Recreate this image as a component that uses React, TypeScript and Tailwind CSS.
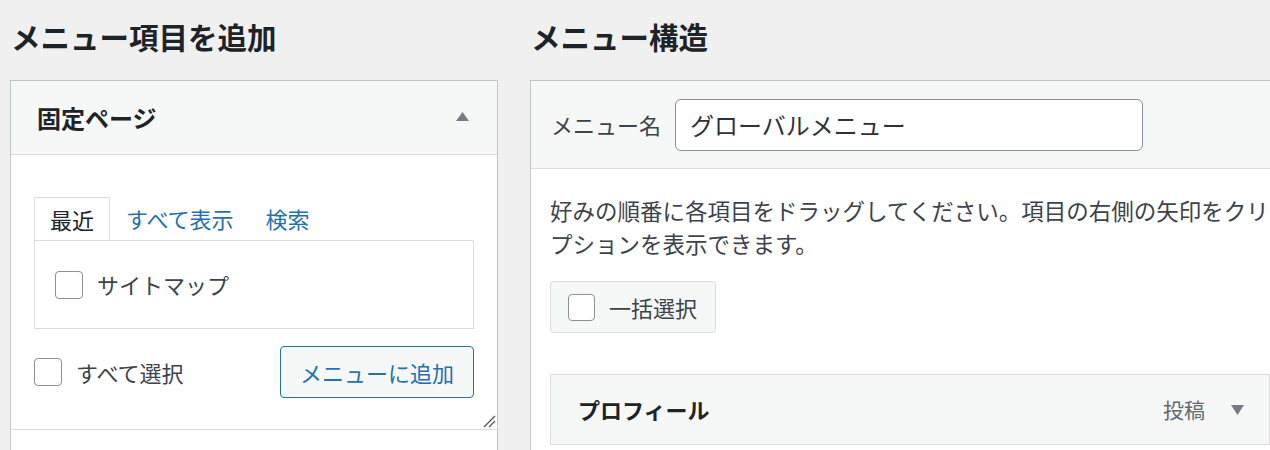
import React from "react";

const FONT = { fontFamily: '"Noto Sans CJK JP", "Noto Sans", sans-serif' };

function Checkbox({ size = 28 }: { size?: number }) {
  return (
    <span
      className="inline-block shrink-0 rounded-[4px] border border-[#8c8f94] bg-white"
      style={{ width: size, height: size }}
    />
  );
}

export default function App() {
  return (
    <div
      className="flex h-[450px] w-[1270px] items-start overflow-hidden bg-[#f0f0f1] text-[#3c434a]"
      style={FONT}
    >
      {/* Left column */}
      <div className="ml-[10px] w-[488px] shrink-0">
        <h2 className="mt-[17px] mb-[25px] pl-[1px] text-[29.5px] font-bold leading-[38px] text-[#1d2327]">
          メニュー項目を追加
        </h2>
        <div className="border border-[#c3c4c7] bg-white">
          <div className="flex h-[74px] items-center justify-between border-b border-[#dcdcde] bg-[#f6f7f7] pl-[26px] pr-[28px]">
            <h3 className="text-[24px] font-bold text-[#1d2327]">固定ページ</h3>
            <svg className="mb-[3px]" width="13" height="9" viewBox="0 0 13 9">
              <polygon points="6.5,0 13,9 0,9" fill="#787c82" />
            </svg>
          </div>
          <div className="relative px-[23px] pt-[42px] pb-[31px]">
            <div className="flex items-end">
              <div className="flex h-[43px] items-center border-x border-t border-[#dcdcde] bg-white px-[15px] text-[22px] text-[#1d2327]">
                最近
              </div>
              <div className="flex h-[43px] items-center pl-[16px] text-[22px] text-[#2271b1]">
                すべて表示
              </div>
              <div className="flex h-[43px] items-center pl-[32px] text-[22px] text-[#2271b1]">
                検索
              </div>
            </div>
            <div className="flex h-[89px] items-center gap-[14px] border border-[#dcdcde] pl-[20px]">
              <Checkbox />
              <span className="text-[22px] text-[#3c434a]">サイトマップ</span>
            </div>
            <div className="mt-[17px] flex h-[52px] items-center justify-between">
              <div className="flex items-center gap-[14px]">
                <Checkbox />
                <span className="text-[22px] text-[#3c434a]">すべて選択</span>
              </div>
              <div className="flex h-[52px] w-[194px] items-center justify-center rounded-[4px] border border-[#2271b1] bg-[#f6f7f7] text-[22px] text-[#2271b1]">
                メニューに追加
              </div>
            </div>
            <svg
              className="absolute right-[1px] bottom-[1px]"
              width="13"
              height="13"
              viewBox="0 0 13 13"
            >
              <line x1="1" y1="12" x2="12" y2="1" stroke="#50575e" strokeWidth="1.3" />
              <line x1="6" y1="12" x2="12" y2="6" stroke="#50575e" strokeWidth="1.3" />
            </svg>
          </div>
          <div className="h-[40px] border-t border-[#dcdcde] bg-white" />
        </div>
      </div>

      {/* Right column */}
      <div className="ml-[32px] w-[760px] shrink-0">
        <h2 className="mt-[17px] mb-[25px] pl-[1px] text-[29.5px] font-bold leading-[38px] text-[#1d2327]">
          メニュー構造
        </h2>
        <div className="border border-[#c3c4c7] bg-white">
          <div className="flex h-[88px] items-center gap-[14px] border-b border-[#dcdcde] bg-[#f6f7f7] pl-[20px]">
            <span className="text-[22px] text-[#3c434a]">メニュー名</span>
            <div className="flex h-[52px] w-[468px] items-center rounded-[6px] border border-[#8c8f94] bg-white pl-[14px] text-[24px] text-[#2c3338]">
              グローバルメニュー
            </div>
          </div>
          <div className="px-[19px] pt-[25px] pb-[30px]">
            <p className="whitespace-nowrap text-[22.5px] leading-[33px] text-[#3c434a]">
              好みの順番に各項目をドラッグしてください。項目の右側の矢印をクリックすると、追加の設定オ
              <br />
              プションを表示できます。
            </p>
            <div className="mt-[21px] inline-flex h-[52px] items-center gap-[14px] rounded-[4px] border border-[#dcdcde] bg-[#f6f7f7] pl-[17px] pr-[18px]">
              <Checkbox size={27} />
              <span className="text-[22px] text-[#3c434a]">一括選択</span>
            </div>
            <div className="mt-[41px] flex h-[71px] w-[720px] items-center justify-between border border-[#dcdcde] bg-[#f6f7f7] pl-[27px] pr-[25px]">
              <span className="text-[22px] font-bold text-[#1d2327]">プロフィール</span>
              <div className="flex items-center gap-[26px]">
                <span className="text-[21px] text-[#646970]">投稿</span>
                <svg width="13" height="10" viewBox="0 0 13 10">
                  <polygon points="0,0 13,0 6.5,10" fill="#787c82" />
                </svg>
              </div>
            </div>
          </div>
        </div>
      </div>
    </div>
  );
}
